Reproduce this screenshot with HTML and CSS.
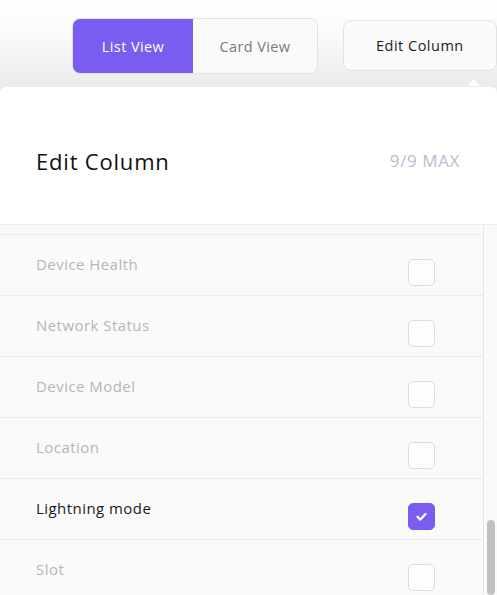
FILE: index.html
```html
<!DOCTYPE html>
<html>
<head>
<meta charset="utf-8">
<link rel="stylesheet" href="styles.css">
</head>
<body>
<div class="toolbar">
  <div class="seg">
    <div class="seg-btn active">List View</div>
    <div class="seg-btn">Card View</div>
  </div>
  <div class="edit-btn">Edit Column<span class="caret"></span></div>
</div>
<div class="panel">
  <div class="panel-head">
    <div class="title">Edit Column</div>
    <div class="count">9/9 MAX</div>
  </div>
  <div class="panel-body">
    <div class="rows">
      <div class="row-stub"></div>
      <div class="row"><span class="label">Device Health</span><span class="cb"></span></div>
      <div class="row"><span class="label">Network Status</span><span class="cb"></span></div>
      <div class="row"><span class="label">Device Model</span><span class="cb"></span></div>
      <div class="row"><span class="label">Location</span><span class="cb"></span></div>
      <div class="row on"><span class="label">Lightning mode</span><span class="cb checked"><svg viewBox="0 0 12 12" width="13" height="13"><path d="M2.4 6.3 L5 8.8 L9.7 3.7" fill="none" stroke="#fff" stroke-width="2.2" stroke-linecap="round" stroke-linejoin="round"/></svg></span></div>
      <div class="row"><span class="label">Slot</span><span class="cb"></span></div>
    </div>
    <div class="track"><div class="thumb"></div></div>
  </div>
</div>
</body>
</html>
```
FILE: styles.css
```css
html, body {
  margin: 0;
  padding: 0;
  height: 100%;
  overflow: hidden;
}
body {
  font-family: "Open Sans", "Noto Sans", sans-serif;
  background: linear-gradient(180deg, #ffffff 0%, #fafafa 40%, #ebebeb 100%);
  background-size: 100% 88px;
  background-repeat: no-repeat;
  background-color: #ebebeb;
}
.toolbar {
  display: flex;
  align-items: flex-start;
  gap: 25px;
  padding: 18px 0 0 72px;
  height: 69px;
}
.seg {
  display: flex;
  height: 54px;
  border: 1px solid #e2e2e2;
  border-radius: 8px;
  overflow: hidden;
  background: #fafafa;
}
.seg-btn {
  display: flex;
  align-items: center;
  justify-content: center;
  font-size: 14.5px;
  letter-spacing: 0.4px;
  color: #7a7a7a;
  width: 125px;
}
.seg-btn.active {
  width: 121px;
  background: #7b5cf0;
  color: #ffffff;
}
.edit-btn {
  position: relative;
  margin-top: 2px;
  width: 155px;
  height: 51px;
  border: 1px solid #e2e2e2;
  border-radius: 8px;
  background: #fafafa;
  display: flex;
  align-items: center;
  padding-left: 32px;
  box-sizing: border-box;
  font-size: 14.5px;
  letter-spacing: 0.5px;
  color: #1c1c1c;
}
.caret {
  position: absolute;
  left: 124px;
  top: 58px;
  width: 0;
  height: 0;
  border-left: 6px solid transparent;
  border-right: 6px solid transparent;
  border-bottom: 7px solid #ffffff;
}
.panel {
  background: #ffffff;
  border-radius: 6px 6px 0 0;
  height: 508px;
  display: flex;
  flex-direction: column;
}
.panel-head {
  height: 137px;
  border-bottom: 1px solid #ebebeb;
  display: flex;
  align-items: center;
  justify-content: space-between;
  padding: 0 37px 0 36px;
}
.title {
  font-size: 22px;
  letter-spacing: 0.8px;
  color: #111111;
  margin-top: 10px;
}
.count {
  font-size: 17px;
  letter-spacing: 0.6px;
  color: #b9bdd0;
  margin-top: 10px;
}
.panel-body {
  flex: 1;
  display: flex;
  overflow: hidden;
  background: #fafafa;
}
.rows {
  flex: 1;
}
.row-stub {
  height: 9px;
  border-bottom: 1px solid #ebebeb;
}
.row {
  height: 60px;
  border-bottom: 1px solid #ebebeb;
  display: flex;
  align-items: center;
  justify-content: space-between;
  padding: 0 48px 0 36px;
}
.label {
  font-size: 15px;
  letter-spacing: 0.45px;
  color: #b6b6b6;
  margin-top: -2px;
}
.row.on .label {
  color: #1a1a1a;
}
.cb {
  width: 25px;
  height: 25px;
  border: 1px solid #dcdae6;
  border-radius: 5px;
  background: #fdfdfd;
  margin-top: 14px;
  display: flex;
  align-items: center;
  justify-content: center;
}
.cb.checked {
  background: #7b5cf0;
  border-color: #7b5cf0;
}
.track {
  width: 13px;
  border-left: 1px solid #e6e6e6;
  background: #fafafa;
  display: flex;
  flex-direction: column;
  align-items: center;
}
.thumb {
  margin-top: 295px;
  width: 8px;
  height: 120px;
  border-radius: 4px;
  background: #c1c1c1;
}
```
